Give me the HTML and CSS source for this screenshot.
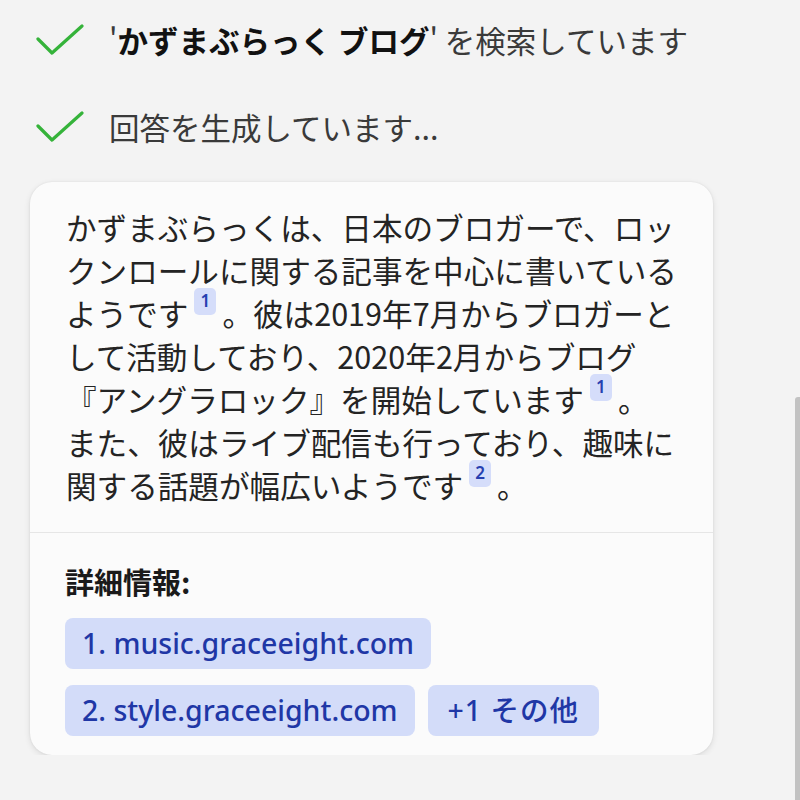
FILE: index.html
```html
<!DOCTYPE html>
<html lang="ja">
<head>
    <meta charset="UTF-8">
    <meta name="viewport" content="width=device-width, initial-scale=1.0">
    <title>回答</title>
    <link rel="stylesheet" href="styles.css">
</head>
<body>
    <div class="chat">
        <div class="step">
            <svg class="check" viewBox="0 0 48 32" width="48" height="32">
                <polyline points="2,15 16,29 46,2" />
            </svg>
            <span class="step-text">'<b>かずまぶらっく ブログ</b>' を検索しています</span>
        </div>
        <div class="step">
            <svg class="check" viewBox="0 0 48 32" width="48" height="32">
                <polyline points="2,15 16,29 46,2" />
            </svg>
            <span class="step-text">回答を生成しています...</span>
        </div>

        <div class="answer-card">
            <div class="answer-body">
                かずまぶらっくは、日本のブロガーで、ロックンロールに関する記事を中心に書いているようです<a class="cite" href="#">1</a>。彼は2019年7月からブロガーとして活動しており、2020年2月からブログ『アングラロック』を開始しています<a class="cite" href="#">1</a>。<br>また、彼はライブ配信も行っており、趣味に関する話題が幅広いようです<a class="cite" href="#">2</a>。
            </div>
            <div class="answer-sources">
                <div class="sources-label">詳細情報:</div>
                <div class="source-list">
                    <a class="source-chip" href="#">1. music.graceeight.com</a>
                    <a class="source-chip" href="#">2. style.graceeight.com</a>
                    <a class="source-chip more" href="#">+1 その他</a>
                </div>
            </div>
        </div>
    </div>
    <div class="scrollbar"></div>
</body>
</html>
```

FILE: styles.css
```css
body {
    margin: 0;
    background-color: #f3f3f3;
    font-family: "Noto Sans CJK JP", "Noto Sans", sans-serif;
    color: #242424;
    overflow: hidden;
}
.chat {
    padding-top: 18px;
}
.step {
    display: flex;
    align-items: center;
    gap: 25px;
    height: 44px;
    margin-left: 36px;
    margin-bottom: 43px;
}
.check polyline {
    fill: none;
    stroke: #35b33a;
    stroke-width: 3.2;
    stroke-linecap: round;
    stroke-linejoin: round;
}
.step-text {
    font-size: 30.5px;
    color: #3a3a3a;
    white-space: nowrap;
}
.step-text b {
    color: #111;
}
.answer-card {
    width: 683px;
    margin: -10px 0 0 30px;
    background: #fbfbfb;
    border-radius: 22px;
    box-shadow: 0 2px 6px rgba(0, 0, 0, 0.1), 0 0 2px rgba(0, 0, 0, 0.08);
    overflow: hidden;
}
.answer-body {
    padding: 24px 30px 25px 36px;
    font-size: 30.6px;
    line-height: 43px;
    color: #242424;
}
.cite {
    display: inline-block;
    position: relative;
    top: -19px;
    width: 22px;
    height: 27px;
    line-height: 26px;
    margin: 0 6px 0 6px;
    font-family: "Noto Sans", sans-serif;
    font-size: 17px;
    font-weight: 600;
    text-align: center;
    text-decoration: none;
    color: #2740b0;
    background-color: #d5ddfa;
    border-radius: 5px;
}
.answer-sources {
    border-top: 1px solid #e6e6e6;
    padding: 30px 35px 19px 35px;
}
.sources-label {
    font-size: 29px;
    line-height: 36px;
    font-weight: bold;
    color: #1a1a1a;
    margin-bottom: 19px;
}
.source-list {
    display: flex;
    flex-wrap: wrap;
    gap: 16px 13px;
    width: 560px;
}
.source-chip {
    display: inline-block;
    height: 51px;
    line-height: 51px;
    padding: 0 17px;
    font-family: "Noto Sans", "Noto Sans CJK JP", sans-serif;
    font-size: 28.5px;
    font-weight: 500;
    color: #1f37a6;
    background-color: #d3dcf9;
    border-radius: 8px;
    text-decoration: none;
}
.source-chip.more {
    padding: 0 20px;
    letter-spacing: 1px;
}
.scrollbar {
    position: fixed;
    right: 0;
    top: 397px;
    bottom: 0;
    width: 5px;
    background-color: #c2c2c2;
    border-radius: 3px 0 0 0;
}
```
